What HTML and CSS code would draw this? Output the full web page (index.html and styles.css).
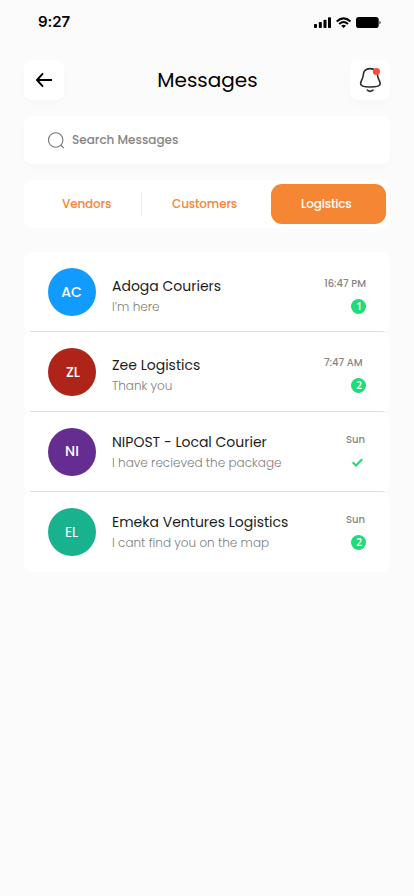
FILE: index.html
```html
<!DOCTYPE html>
<html lang="en">
<head>
<meta charset="utf-8">
<meta name="viewport" content="width=device-width, initial-scale=1">
<title>Messages</title>
<link rel="stylesheet" href="styles.css">
</head>
<body>
<div class="status">
  <span class="clock">9:27</span>
  <svg width="68" height="12" viewBox="0 0 68 12">
    <rect x="0" y="7" width="3" height="4" rx=".8"/><rect x="4.8" y="5" width="3" height="6" rx=".8"/><rect x="9.5" y="2.7" width="3" height="8.3" rx=".8"/><rect x="14" y=".3" width="3" height="10.7" rx=".8"/>
    <g fill="none" stroke="#000" stroke-width="2"><path d="M22.7 4.5Q29.6-1.8 36.5 4.5"/><path d="M25.2 7.1Q29.6 3 34 7.1"/></g><path d="M27.2 8.7q2.4-1.8 4.8 0L29.6 11z"/>
    <rect x="42" y="0" width="22.7" height="11" rx="2.8"/><path d="M65.3 3.8q1.5.5 1.5 1.8t-1.5 1.8z" fill="#555"/>
  </svg>
</div>
<header class="header">
  <button class="icon-btn" aria-label="Back"><svg width="40" height="40" viewBox="0 0 40 40" fill="none" stroke="#000" stroke-width="1.9"><path d="M28 20H13M19 13.3L13 20L19 26.7" stroke-linejoin="round"/></svg></button>
  <h1>Messages</h1>
  <button class="icon-btn" aria-label="Notifications"><svg width="40" height="40" viewBox="0 0 40 40" fill="none" stroke="#292d32" stroke-width="1.6" stroke-linecap="round"><path d="M20 8.6C15.8 8.6 13.3 11.3 13.3 15C13.3 18.8 10.6 20.8 10.6 23.7C10.6 26.2 14.3 27 20 27S30.2 26.2 30.2 23.7C30.2 20.8 27.5 18.8 27.5 15C27.5 11.3 24.7 8.6 20 8.6Z"/><path d="M17.4 30.1Q20.2 32.6 23 30.1"/><circle cx="26.4" cy="11.5" r="3.6" fill="#ff4a3d" stroke="none"/></svg></button>
</header>
<main>
  <div class="search">
    <svg width="16" height="17" viewBox="0 0 16 17" fill="none" stroke="#777" stroke-width="1.1"><circle cx="7.7" cy="8" r="7.2"/><path d="M12.7 13l3 3"/></svg>
    <span>Search Messages</span>
  </div>
  <nav class="tabs">
    <a class="tab">Vendors</a>
    <a class="tab tab-mid">Customers</a>
    <a class="tab active">Logistics</a>
  </nav>
  <section class="list">
    <article class="row r1">
      <div class="avatar">AC</div>
      <div class="body"><h2>Adoga Couriers</h2><p>I’m here</p></div>
      <div class="meta"><time>16:47 PM</time><span class="badge">1</span></div>
    </article>
    <article class="row r2">
      <div class="avatar">ZL</div>
      <div class="body"><h2>Zee Logistics</h2><p>Thank you</p></div>
      <div class="meta"><time class="short">7:47 AM</time><span class="badge">2</span></div>
    </article>
    <article class="row r3">
      <div class="avatar">NI</div>
      <div class="body"><h2>NIPOST - Local Courier</h2><p>I have recieved the package</p></div>
      <div class="meta"><time class="day">Sun</time><svg class="check" width="15" height="15" viewBox="0 0 15 15" fill="none" stroke="#1fdb78" stroke-width="2.2"><path d="M1.7 7.3l3.3 3.2 6.2-6.2"/></svg></div>
    </article>
    <article class="row r4">
      <div class="avatar">EL</div>
      <div class="body"><h2>Emeka Ventures Logistics</h2><p>I cant find you on the map</p></div>
      <div class="meta"><time class="day">Sun</time><span class="badge">2</span></div>
    </article>
  </section>
</main>
</body>
</html>
```
FILE: styles.css
```css
* { box-sizing: border-box; margin: 0; padding: 0; }
body { width: 414px; min-height: 896px; background: #fbfbfb; font-family: Poppins, Inter, sans-serif; color: #1c1c1c; white-space: nowrap; }
svg { display: block; flex: none; }
.status { height: 60px; padding: 12px 32px 0 38px; display: flex; justify-content: space-between; }
.status svg { margin-top: 5px; }
.clock { font: 600 15px/20px Inter, sans-serif; color: #000; letter-spacing: -.1px; }
.header { height: 40px; padding: 0 24px; display: flex; justify-content: space-between; }
.icon-btn { width: 40px; height: 40px; border: 0; border-radius: 8px; background: #fff; box-shadow: 0 4px 10px rgba(0,0,0,.02); }
h1 { padding-left: 1px; font-size: 20px; font-weight: 400; line-height: 40px; color: #000; }
main { padding: 16px 24px 0; }
.search { height: 48px; padding: 0 24px; display: flex; align-items: center; gap: 8px; background: #fff; border-radius: 8px; box-shadow: 0 4px 10px rgba(0,0,0,.02); font-size: 12px; font-weight: 500; color: #858585; }
.tabs { height: 48px; margin-top: 16px; padding: 4px; display: grid; grid-template-columns: 113px 130px 115px; background: #fff; border-radius: 8px; font-size: 12px; font-weight: 500; line-height: 40px; letter-spacing: -.15px; color: #f58634; }
.tab { padding-left: 34px; }
.tab-mid { padding-left: 31px; background: linear-gradient(#ebebeb, #ebebeb) 0 8px / 1px 24px no-repeat; }
.tab.active { padding-left: 30px; border-radius: 11px; background: #f58634; color: #fff; }
.list { margin-top: 24px; }
.row { height: 80px; padding: 16px 24px; display: flex; background: #fff; border-radius: 8px; }
.row:not(:last-child) { background: linear-gradient(#dedede, #dedede) 6px 79px / 356px 1px no-repeat, #fff; }
.avatar { width: 48px; height: 48px; border-radius: 50%; color: #fff; font-size: 14px; font-weight: 500; line-height: 49px; text-align: center; }
.r1 .avatar { background: #129bff; padding-right: 1px; }
.r2 .avatar { background: #ae2418; padding-left: 2px; }
.r3 .avatar { background: #652d90; line-height: 47px; }
.r4 .avatar { background: #18b28f; font-weight: 400; padding-right: 1px; }
.body { margin-left: 16px; flex: 1; }
.body, .meta { padding-top: 7px; }
.r2 .body, .r2 .meta { padding-top: 6px; }
.r3 .body, .r3 .meta, .r4 .body, .r4 .meta { padding-top: 3px; }
h2 { font-size: 14px; font-weight: 400; line-height: 22px; }
p { font-size: 12px; font-weight: 300; line-height: 20px; color: #808080; }
.meta { display: flex; flex-direction: column; align-items: flex-end; width: 50px; }
time { font-size: 10px; font-weight: 500; line-height: 17px; color: #858585; }
.short { margin-right: 3.5px; }
.day { margin-right: 1px; }
.badge { width: 15px; height: 15px; margin-top: 7px; padding-left: 1px; border-radius: 50%; background: #1fdb78; color: #fff; font: 600 10px/15px "Noto Sans", sans-serif; text-align: center; }
.check { margin-top: 7px; }
```
